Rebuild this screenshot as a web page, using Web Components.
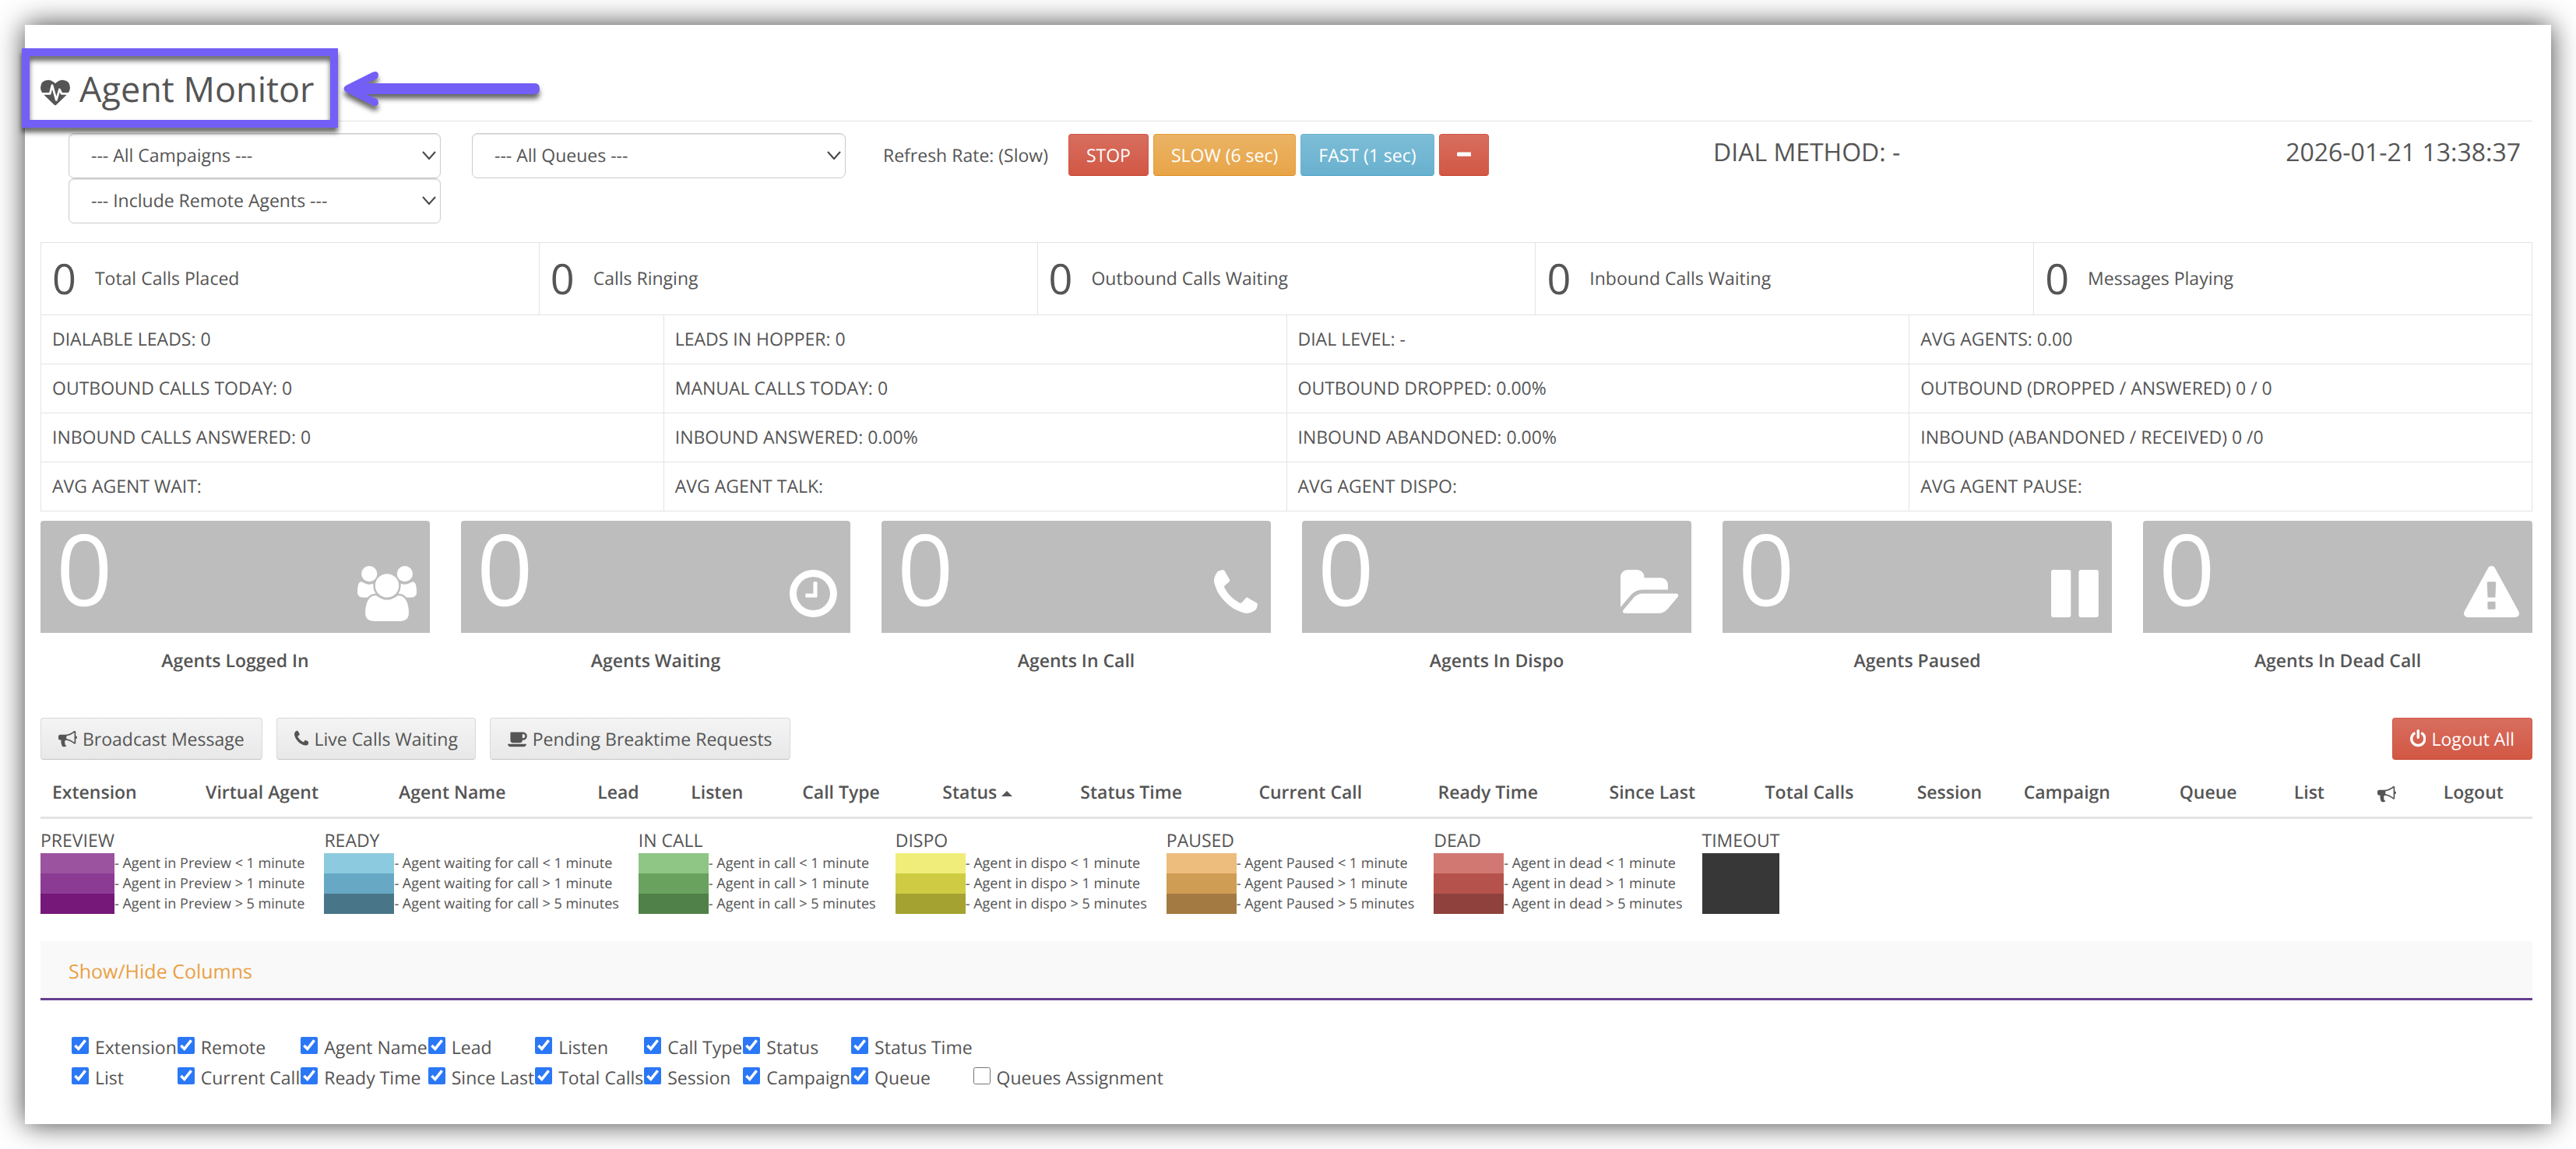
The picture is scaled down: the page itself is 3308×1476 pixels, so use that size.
<!DOCTYPE html>
<html lang="en">
<head>
<meta charset="utf-8">
<title>Agent Monitor</title>
<style>
  body {
    margin: 0;
    padding: 32px;
    background: #fff;
    color: #555;
    font-family: "Open Sans", sans-serif;
    font-size: 23px;
    line-height: 34px;
    text-rendering: geometricPrecision;
  }
</style>
</head>
<body>
<monitor-panel>
  <page-header>
    <title-callout><monitor-icon name="heartbeat" size="38"></monitor-icon>Agent Monitor</title-callout>
  </page-header>

  <monitor-controls>
    <filter-select slot="campaign" label="Campaigns" option="--- All Campaigns ---"></filter-select>
    <filter-select slot="campaign" label="Remote agents" option="--- Include Remote Agents ---"></filter-select>
    <filter-select slot="queue" label="Queues" option="--- All Queues ---"></filter-select>
    <span slot="refresh">Refresh Rate: (Slow)</span>
    <action-button slot="rate" kind="danger">STOP</action-button>
    <action-button slot="rate" kind="warning">SLOW (6 sec)</action-button>
    <action-button slot="rate" kind="info">FAST (1 sec)</action-button>
    <action-button slot="rate" kind="danger" label="Hide"><monitor-icon name="minus"></monitor-icon></action-button>
    <span slot="method">DIAL METHOD: -</span>
    <time slot="clock" datetime="2026-01-21T13:38:37">2026-01-21 13:38:37</time>
  </monitor-controls>

  <call-counts></call-counts>
  <call-stats></call-stats>

  <tile-row>
    <agent-tile icon="users" count="0">Agents Logged In</agent-tile>
    <agent-tile icon="clock" count="0">Agents Waiting</agent-tile>
    <agent-tile icon="phone" count="0">Agents In Call</agent-tile>
    <agent-tile icon="folder" count="0">Agents In Dispo</agent-tile>
    <agent-tile icon="pause" count="0">Agents Paused</agent-tile>
    <agent-tile icon="warning" count="0">Agents In Dead Call</agent-tile>
  </tile-row>

  <button-bar>
    <action-button><monitor-icon name="bullhorn"></monitor-icon>Broadcast Message</action-button>
    <action-button><monitor-icon name="phone"></monitor-icon>Live Calls Waiting</action-button>
    <action-button><monitor-icon name="coffee"></monitor-icon>Pending Breaktime Requests</action-button>
    <action-button slot="end" kind="danger"><monitor-icon name="power"></monitor-icon>Logout All</action-button>
  </button-bar>

  <agent-table></agent-table>

  <status-legend></status-legend>

  <column-picker></column-picker>
</monitor-panel>

<script>
  // viewBox and path of each icon, on a 1792 unit em
  const ICONS = {
    heartbeat: ['0 0 1792 1792', 'M1280 1024h305q-5 6-10 10.5t-9 7.5l-3 4-623 600q-18 18-44 18t-44-18l-624-602q-5-2-21-20h369q22 0 39.5-13.5t22.5-34.5l70-281 190 667q6 20 23 33t39 13q21 0 38-13t23-33l146-485 56 112q18 35 57 35zm512-428q0 145-103 300h-369l-111-221q-8-17-25.5-27t-36.5-8q-45 5-56 46l-129 430-196-686q-6-20-23.5-33t-39.5-13-39 13.5-22 34.5l-116 464h-423q-103-155-103-300 0-220 127-344t351-124q62 0 126.5 21.5t120 58 95.5 68.5 76 68q36-36 76-68t95.5-68.5 120-58 126.5-21.5q224 0 351 124t127 344z'],
    users: ['64 0 1920 1792', 'M657 896q-162 5-265 128h-134q-82 0-138-40.5t-56-118.5q0-353 124-353 6 0 43.5 21t97.5 42.5 119 21.5q67 0 133-23-5 37-5 66 0 139 81 256zm1071 637q0 120-73 189.5t-194 69.5h-874q-121 0-194-69.5t-73-189.5q0-53 3.5-103.5t14-109 26.5-108.5 43-97.5 62-81 85.5-53.5 111.5-20q10 0 43 21.5t73 48 107 48 135 21.5 135-21.5 107-48 73-48 43-21.5q61 0 111.5 20t85.5 53.5 62 81 43 97.5 26.5 108.5 14 109 3.5 103.5zm-1024-1277q0 106-75 181t-181 75-181-75-75-181 75-181 181-75 181 75 75 181zm704 384q0 159-112.5 271.5t-271.5 112.5-271.5-112.5-112.5-271.5 112.5-271.5 271.5-112.5 271.5 112.5 112.5 271.5zm576 225q0 78-56 118.5t-138 40.5h-134q-103-123-265-128 81-117 81-256 0-29-5-66 66 23 133 23 59 0 119-21.5t97.5-42.5 43.5-21q124 0 124 353zm-128-609q0 106-75 181t-181 75-181-75-75-181 75-181 181-75 181 75 75 181z'],
    clock: ['128 0 1536 1792', 'M1024 544v448q0 14-9 23t-23 9h-320q-14 0-23-9t-9-23v-64q0-14 9-23t23-9h224v-352q0-14 9-23t23-9h64q14 0 23 9t9 23zm416 352q0-148-73-273t-198-198-273-73-273 73-198 198-73 273 73 273 198 198 273 73 273-73 198-198 73-273zm224 0q0 209-103 385.5t-279.5 279.5-385.5 103-385.5-103-279.5-279.5-103-385.5 103-385.5 279.5-279.5 385.5-103 385.5 103 279.5 279.5 103 385.5z'],
    phone: ['192 0 1408 1792', 'M1600 1240q0 27-10 70.5t-21 68.5q-21 50-122 106-94 51-186 51-27 0-53-3.5t-57.5-12.5-47-14.5-55.5-20.5-49-18q-98-35-175-83-127-79-264-216t-216-264q-48-77-83-175-3-9-18-49t-20.5-55.5-14.5-47-12.5-57.5-3.5-53q0-92 51-186 56-101 106-122 25-11 68.5-21t70.5-10q14 0 21 3 18 6 53 76 11 19 30 54t35 63.5 31 53.5q3 4 17.5 25t21.5 35.5 7 28.5q0 20-28.5 50t-62 55-62 53-28.5 46q0 9 5 22.5t8.5 20.5 14 24 11.5 19q76 137 174 235t235 174q2 1 19 11.5t24 14 20.5 8.5 22.5 5q18 0 46-28.5t53-62 55-62 50-28.5q14 0 28.5 7t35.5 21.5 25 17.5q25 15 53.5 31t63.5 35 54 30q70 35 76 53 3 7 3 21z'],
    folder: ['64 0 1880 1792', 'M1943 952q0 31-31 66l-336 396q-43 51-120.5 86.5t-143.5 35.5h-1088q-34 0-60.5-13t-26.5-43q0-31 31-66l336-396q43-51 120.5-86.5t143.5-35.5h1088q34 0 60.5 13t26.5 43zm-343-344v160h-832q-94 0-197 47.5t-164 119.5l-337 396-5 6q0-4-.5-12.5t-.5-12.5v-960q0-92 66-158t158-66h320q92 0 158 66t66 158v32h544q92 0 158 66t66 158z'],
    pause: ['128 0 1536 1792', 'M1664 192v1408q0 26-19 45t-45 19h-512q-26 0-45-19t-19-45v-1408q0-26 19-45t45-19h512q26 0 45 19t19 45zm-896 0v1408q0 26-19 45t-45 19h-512q-26 0-45-19t-19-45v-1408q0-26 19-45t45-19h512q26 0 45 19t19 45z'],
    warning: ['0 0 1792 1792', 'M1024 1375v-190q0-14-9.5-23.5t-22.5-9.5h-192q-13 0-22.5 9.5t-9.5 23.5v190q0 14 9.5 23.5t22.5 9.5h192q13 0 22.5-9.5t9.5-23.5zm-2-374l18-459q0-12-10-19-13-11-24-11h-220q-11 0-24 11-10 7-10 21l17 457q0 10 10 16.5t24 6.5h185q14 0 23.5-6.5t10.5-16.5zm-14-934l768 1408q35 63-2 126-17 29-46.5 46t-63.5 17h-1536q-34 0-63.5-17t-46.5-46q-37-63-2-126l768-1408q17-31 47-49t65-18 65 18 47 49z'],
    bullhorn: ['0 0 1792 1792', 'M1664 640q53 0 90.5 37.5t37.5 90.5-37.5 90.5-90.5 37.5v384q0 52-38 90t-90 38q-417-347-812-380-58 19-91 66t-31 100.5 40 92.5q-20 33-23 65.5t6 58 33.5 55 48 50 61.5 50.5q-29 58-111.5 83t-168.5 11.5-132-55.5q-7-23-29.5-87.5t-32-94.5-23-89-15-101 3.5-98.5 22-110.5h-122q-66 0-113-47t-47-113v-192q0-66 47-113t113-47h480q435 0 896-384 52 0 90 38t38 90v384zm-128 604v-954q-394 302-768 343v270q377 42 768 341z'],
    coffee: ['0 0 1856 1792', 'M1664 640q0-80-56-136t-136-56h-64v384h64q80 0 136-56t56-136zm-1664 768h1792q0 106-75 181t-181 75h-1280q-106 0-181-75t-75-181zm1856-768q0 159-112.5 271.5t-271.5 112.5h-64v32q0 92-66 158t-158 66h-704q-92 0-158-66t-66-158v-736q0-26 19-45t45-19h1152q159 0 271.5 112.5t112.5 271.5z'],
    power: ['128 0 1536 1792', 'M1664 896q0 156-61 298t-164 245-245 164-298 61-298-61-245-164-164-245-61-298q0-182 80.5-343t226.5-270q43-32 95.5-25t83.5 50q32 42 24.5 94.5t-49.5 84.5q-98 74-151.5 181t-53.5 228q0 104 40.5 198.5t109.5 163.5 163.5 109.5 198.5 40.5 198.5-40.5 163.5-109.5 109.5-163.5 40.5-198.5q0-121-53.5-228t-151.5-181q-42-32-49.5-84.5t24.5-94.5q31-43 84-50t95 25q146 109 226.5 270t80.5 343zm-640-768v640q0 52-38 90t-90 38-90-38-38-90v-640q0-52 38-90t90-38 90 38 38 90z'],
    minus: ['192 0 1408 1792', 'M1600 736v192q0 40-28 68t-68 28h-1216q-40 0-68-28t-28-68v-192q0-40 28-68t68-28h1216q40 0 68 28t28 68z']
  };

  class MonitorElement extends HTMLElement {
    constructor() {
      super();
      this.attachShadow({mode: 'open'});
    }

    connectedCallback() {
      const template = document.createElement('template');
      template.innerHTML = this.template();
      this.shadowRoot.replaceChildren(template.content);
    }
  }

  customElements.define('monitor-icon', class extends MonitorElement {
    template() {
      const [box, path] = ICONS[this.getAttribute('name')];
      const size = Number(this.getAttribute('size')) || 24;
      return `
        <style>
          :host { display: inline-block; flex: none; }
          svg { display: block; height: ${size}px; fill: currentColor; }
        </style>
        <svg viewBox="${box}" aria-hidden="true"><path d="${path}"/></svg>`;
    }
  });

  customElements.define('monitor-panel', class extends MonitorElement {
    template() {
      return `
        <style>
          :host {
            display: block;
            padding: 0 24px 40px 20px;
            background: #fff;
            box-shadow: 0 0 34px rgba(0, 0, 0, .75);
          }
        </style>
        <slot></slot>`;
    }
  });

  customElements.define('page-header', class extends MonitorElement {
    template() {
      return `
        <style>
          :host {
            display: flex;
            padding: 50px 0 7px;
            border-bottom: 1px solid #e3e3e3;
          }
        </style>
        <slot></slot>`;
    }
  });

  // Page title with a frame and an arrow laid over it
  customElements.define('title-callout', class extends MonitorElement {
    template() {
      return `
        <style>
          :host { display: block; position: relative; }
          h1 {
            display: flex;
            align-items: center;
            gap: 12px;
            margin: 0;
            font-size: 45px;
            line-height: 66px;
            font-weight: 400;
          }
          ::slotted(monitor-icon) { margin-top: 8px; }
          .frame, .arrow {
            position: absolute;
            z-index: 1;
            filter: drop-shadow(0 6px 3px rgba(0, 0, 0, .6));
            pointer-events: none;
          }
          .frame {
            inset: -20px -30px -16px -24px;
            border: 10px solid #735ff6;
          }
          .arrow {
            left: calc(100% + 37px);
            top: 8px;
          }
        </style>
        <h1><slot></slot></h1>
        <div class="frame"></div>
        <svg class="arrow" width="254" height="48" aria-hidden="true">
          <path fill="#735ff6" d="M3 20 37 3q7-3 8 3 0 3-2 5l-14 6h217q6 0 6 7t-6 7H29l14 6q2 2 2 5-1 6-8 3L3 28q-5-4 0-8z"/>
        </svg>`;
    }
  });

  customElements.define('filter-select', class extends MonitorElement {
    template() {
      return `
        <style>
          :host { display: grid; align-items: center; }
          select, svg { grid-area: 1 / 1; }
          select {
            appearance: none;
            box-sizing: border-box;
            width: 100%;
            height: 58px;
            padding: 0 28px 2px;
            border: 1px solid #ccc;
            border-radius: 7px;
            background: #fff;
            box-shadow: inset 0 1px 1px rgba(0, 0, 0, .12);
            color: inherit;
            font: inherit;
            text-rendering: inherit;
          }
          svg {
            justify-self: end;
            margin-right: 6px;
            pointer-events: none;
          }
        </style>
        <select aria-label="${this.getAttribute('label')}">
          <option>${this.getAttribute('option')}</option>
        </select>
        <svg width="18" height="12" fill="none" stroke="#444" stroke-width="2" aria-hidden="true"><path d="M1 1l8 9 8-9"/></svg>`;
    }
  });

  customElements.define('action-button', class extends MonitorElement {
    template() {
      const label = this.getAttribute('label');
      return `
        <style>
          :host {
            display: block;
            --from: #f4f4f4;
            --to: #e8e8e8;
            --edge: #d9d9d9;
            --base: #c6c6c6;
          }
          :host([kind]) { color: #fff; }
          :host([kind="danger"]) { --from: #d86e5f; --to: #d25744; --edge: #d05745; --base: #c7432f; }
          :host([kind="warning"]) { --from: #eab364; --to: #e8a548; --edge: #e69c38; --base: #dc8d1c; }
          :host([kind="info"]) { --from: #7dbdd6; --to: #69b1cf; --edge: #6bb3d0; --base: #4ba3c6; }
          button {
            display: flex;
            align-items: center;
            gap: 7px;
            box-sizing: border-box;
            height: 54px;
            padding: 0 22px;
            border: 1px solid var(--edge);
            border-bottom-color: var(--base);
            border-radius: 4px;
            background: linear-gradient(var(--from), var(--to));
            color: inherit;
            font: inherit;
            text-rendering: inherit;
            white-space: nowrap;
          }
        </style>
        <button type="button"${label ? ` aria-label="${label}"` : ''}><slot></slot></button>`;
    }
  });

  customElements.define('monitor-controls', class extends MonitorElement {
    template() {
      return `
        <style>
          :host {
            display: grid;
            grid-template-columns: 478fr 480fr 1034fr 1037fr;
            column-gap: 40px;
            align-items: start;
            margin: 15px 15px 24px 36px;
          }
          .refresh {
            display: flex;
            align-items: center;
            gap: 26px;
            padding: 1px 8px;
          }
          .rates { display: flex; gap: 6px; }
          .state {
            display: flex;
            justify-content: space-between;
            font-size: 32px;
            line-height: 50px;
          }
        </style>
        <div><slot name="campaign"></slot></div>
        <div><slot name="queue"></slot></div>
        <div class="refresh">
          <slot name="refresh"></slot>
          <div class="rates"><slot name="rate"></slot></div>
        </div>
        <div class="state"><slot name="method"></slot><slot name="clock"></slot></div>`;
    }
  });

  const gridTable = `
    :host { display: block; }
    table {
      width: 100%;
      table-layout: fixed;
      border-collapse: separate;
      border-spacing: 0;
      border-right: 1px solid #e3e3e3;
    }
    td {
      box-sizing: border-box;
      padding: 0 14px 2px;
      border-left: 1px solid #e3e3e3;
      border-bottom: 1px solid #e3e3e3;
    }`;

  customElements.define('call-counts', class extends MonitorElement {
    template() {
      const labels = ['Total Calls Placed', 'Calls Ringing', 'Outbound Calls Waiting', 'Inbound Calls Waiting', 'Messages Playing'];
      return `
        <style>
          ${gridTable}
          table { border-top: 1px solid #e3e3e3; }
          td { height: 93px; }
          div { display: flex; align-items: center; gap: 24px; }
          b { font-size: 54px; line-height: 64px; font-weight: 400; }
        </style>
        <table><tr>${labels.map(label => `<td><div><b>0</b><span>${label}</span></div></td>`).join('')}</tr></table>`;
    }
  });

  customElements.define('call-stats', class extends MonitorElement {
    template() {
      const rows = [
        ['DIALABLE LEADS: 0', 'LEADS IN HOPPER: 0', 'DIAL LEVEL: -', 'AVG AGENTS: 0.00'],
        ['OUTBOUND CALLS TODAY: 0', 'MANUAL CALLS TODAY: 0', 'OUTBOUND DROPPED: 0.00%', 'OUTBOUND (DROPPED / ANSWERED) 0 / 0'],
        ['INBOUND CALLS ANSWERED: 0', 'INBOUND ANSWERED: 0.00%', 'INBOUND ABANDONED: 0.00%', 'INBOUND (ABANDONED / RECEIVED) 0 /0'],
        ['AVG AGENT WAIT:', 'AVG AGENT TALK:', 'AVG AGENT DISPO:', 'AVG AGENT PAUSE:']
      ];
      return `
        <style>
          ${gridTable}
          td { height: 63px; }
        </style>
        <table>${rows.map(row => `<tr>${row.map(text => `<td>${text}</td>`).join('')}</tr>`).join('')}</table>`;
    }
  });

  customElements.define('tile-row', class extends MonitorElement {
    template() {
      return `
        <style>
          :host {
            display: grid;
            grid-template-columns: repeat(6, 1fr);
            gap: 40px;
            margin-top: 12px;
          }
        </style>
        <slot></slot>`;
    }
  });

  customElements.define('agent-tile', class extends MonitorElement {
    template() {
      return `
        <style>
          :host { display: block; text-align: center; font-weight: 600; }
          .box {
            display: flex;
            justify-content: space-between;
            align-items: flex-end;
            box-sizing: border-box;
            height: 144px;
            padding: 0 17px 15px 20px;
            border-radius: 4px 4px 0 0;
            background: #bdbdbd;
            color: #fff;
          }
          .count {
            align-self: flex-start;
            font-size: 127px;
            line-height: 122px;
            font-weight: 400;
          }
          .label { padding-top: 18px; }
        </style>
        <div class="box">
          <span class="count">${this.getAttribute('count')}</span>
          <monitor-icon name="${this.getAttribute('icon')}" size="71"></monitor-icon>
        </div>
        <div class="label"><slot></slot></div>`;
    }
  });

  customElements.define('button-bar', class extends MonitorElement {
    template() {
      return `
        <style>
          :host { display: flex; gap: 18px; margin-top: 57px; }
          .end { margin-left: auto; }
        </style>
        <slot></slot>
        <div class="end"><slot name="end"></slot></div>`;
    }
  });

  customElements.define('agent-table', class extends MonitorElement {
    template() {
      // Heading and relative width of each column
      const columns = [
        ['Extension', 197], ['Virtual Agent', 248], ['Agent Name', 255], ['Lead', 120], ['Listen', 143],
        ['Call Type', 180], ['Status <i></i>', 177], ['Status Time', 229], ['Current Call', 230], ['Ready Time', 220],
        ['Since Last', 200], ['Total Calls', 195], ['Session', 137], ['Campaign', 200], ['Queue', 147], ['List', 107],
        ['<monitor-icon name="bullhorn"></monitor-icon>', 85], ['Logout', 129]
      ];
      return `
        <style>
          :host { display: block; }
          table { width: 100%; table-layout: fixed; border-collapse: collapse; }
          th {
            padding: 24px 0 15px 15px;
            border-bottom: 3px solid #e3e3e3;
            font-weight: 600;
            text-align: left;
            white-space: nowrap;
          }
          i {
            display: inline-block;
            vertical-align: middle;
            border: 7px solid transparent;
            border-top: 0;
            border-bottom-color: currentColor;
          }
          monitor-icon { vertical-align: middle; }
        </style>
        <table>
          <colgroup>${columns.map(([, width]) => `<col style="width: ${width}px">`).join('')}</colgroup>
          <thead><tr>${columns.map(([name]) => `<th>${name}</th>`).join('')}</tr></thead>
        </table>`;
    }
  });

  customElements.define('status-legend', class extends MonitorElement {
    template() {
      const groups = [
        ['PREVIEW', ['#9b529f', 'Agent in Preview &lt; 1 minute'], ['#8c3b94', 'Agent in Preview &gt; 1 minute'], ['#75187a', 'Agent in Preview &gt; 5 minute']],
        ['READY', ['#8ccbdf', 'Agent waiting for call &lt; 1 minute'], ['#67a8c4', 'Agent waiting for call &gt; 1 minute'], ['#487688', 'Agent waiting for call &gt; 5 minutes']],
        ['IN CALL', ['#8fc585', 'Agent in call &lt; 1 minute'], ['#69a15f', 'Agent in call &gt; 1 minute'], ['#508148', 'Agent in call &gt; 5 minutes']],
        ['DISPO', ['#f0ed7a', 'Agent in dispo &lt; 1 minute'], ['#cfcc43', 'Agent in dispo &gt; 1 minute'], ['#a4a231', 'Agent in dispo &gt; 5 minutes']],
        ['PAUSED', ['#ecbd7d', 'Agent Paused &lt; 1 minute'], ['#d09d54', 'Agent Paused &gt; 1 minute'], ['#a37b42', 'Agent Paused &gt; 5 minutes']],
        ['DEAD', ['#d27872', 'Agent in dead &lt; 1 minute'], ['#b5524b', 'Agent in dead &gt; 1 minute'], ['#8e413d', 'Agent in dead &gt; 5 minutes']],
        ['TIMEOUT', ['#373737', ''], ['#373737', ''], ['#373737', '']]
      ];
      return `
        <style>
          :host { display: flex; gap: 25px; margin-top: 10px; }
          .group {
            display: grid;
            grid-template-columns: minmax(90px, max-content) max-content;
            grid-template-rows: 34px repeat(3, 26px);
          }
          .name { grid-column: 1; }
          .text { grid-column: 2; font-size: 18px; line-height: 26px; }
        </style>
        ${groups.map(([name, ...levels]) => `
          <div class="group">
            <div class="name">${name}</div>
            ${levels.map(([color, text]) => `
              <div class="name" style="background: ${color}"></div>
              <div class="text">${text && '- ' + text}</div>`).join('')}
          </div>`).join('')}`;
    }
  });

  customElements.define('column-toggle', class extends MonitorElement {
    template() {
      return `
        <style>
          :host { display: block; }
          label { display: flex; align-items: baseline; gap: 8px; line-height: 39px; white-space: nowrap; }
          input { flex: none; width: 22px; height: 22px; margin: 0; accent-color: #2b78f6; }
        </style>
        <label><input type="checkbox"${this.hasAttribute('checked') ? ' checked' : ''}><span><slot></slot></span></label>`;
    }
  });

  customElements.define('column-picker', class extends MonitorElement {
    template() {
      const first = ['Extension', 'Remote', 'Agent Name', 'Lead', 'Listen', 'Call Type', 'Status', 'Status Time'];
      const second = ['List', 'Current Call', 'Ready Time', 'Since Last', 'Total Calls', 'Session', 'Campaign', 'Queue'];
      const toggle = name => `<column-toggle checked>${name}</column-toggle>`;
      return `
        <style>
          :host { display: block; margin-top: 35px; }
          .head {
            padding: 22px 36px 17px;
            border-bottom: 3px solid #663f90;
            background: #f9f9f9;
            font-size: 25px;
          }
          a { color: #eaa043; text-decoration: none; }
          .list {
            display: grid;
            grid-template-columns: repeat(9, max-content);
            column-gap: 1px;
            padding: 41px 40px 0;
          }
          .row { display: contents; }
          .row > :first-child { grid-column: 1; }
        </style>
        <div class="head"><a href="#columns">Show/Hide Columns</a></div>
        <div class="list" id="columns">
          <div class="row">${first.map(toggle).join('')}</div>
          <div class="row">${second.map(toggle).join('')}<column-toggle>Queues Assignment</column-toggle></div>
        </div>`;
    }
  });
</script>
</body>
</html>
